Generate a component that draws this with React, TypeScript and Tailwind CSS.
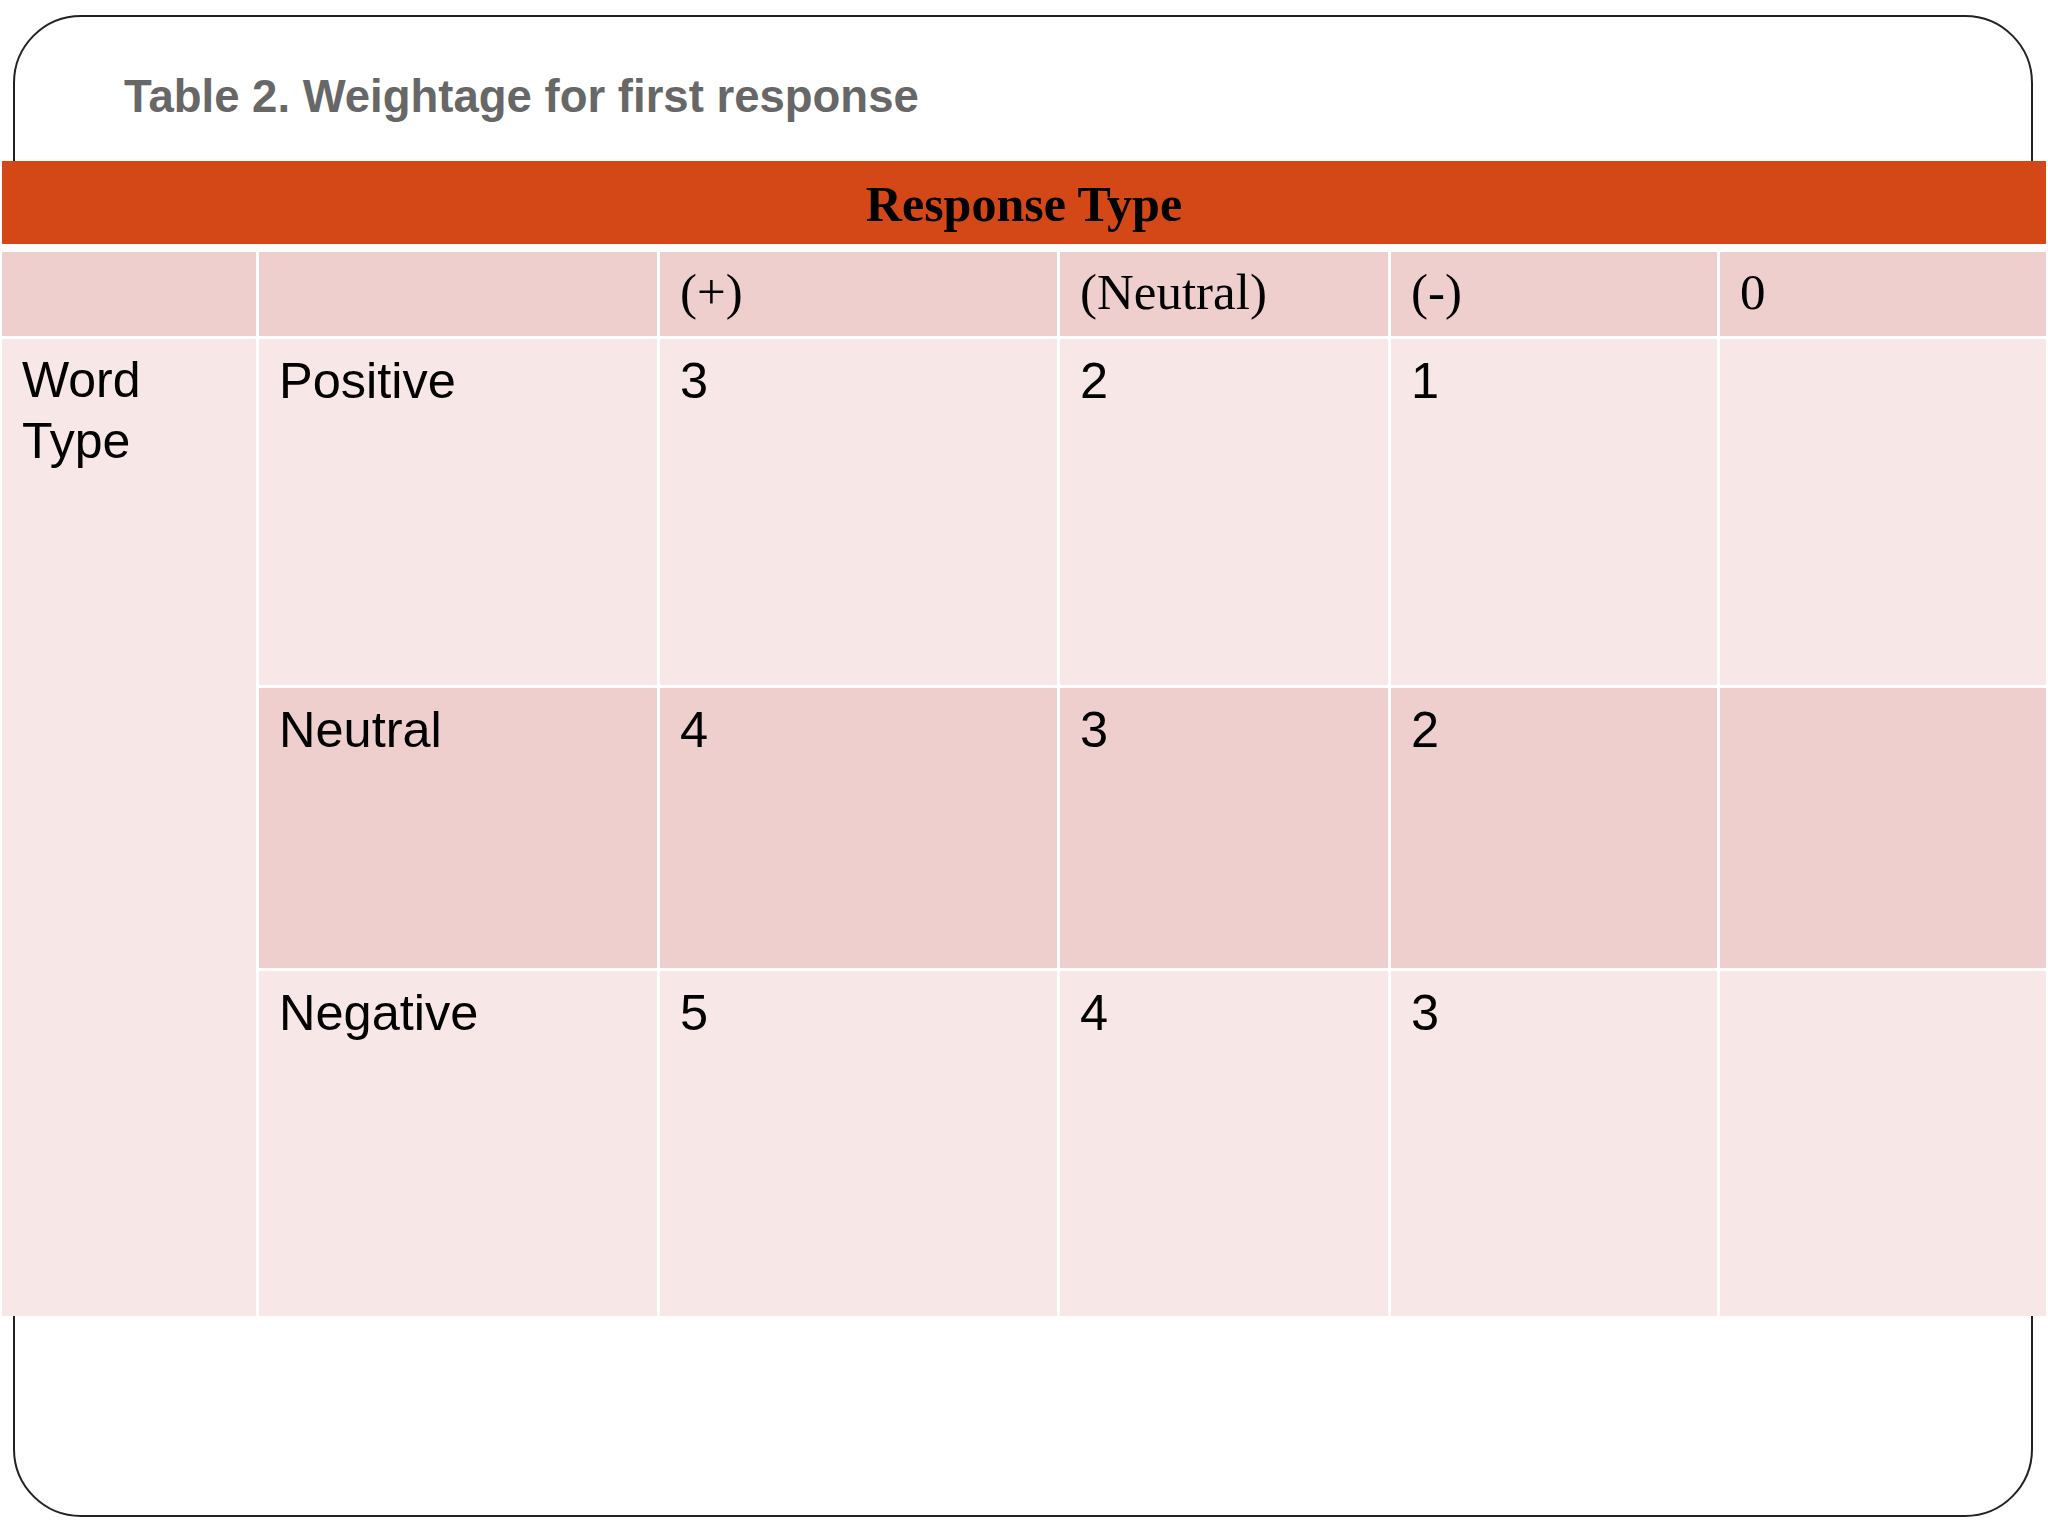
import React from 'react';

const serif = { fontFamily: '"Liberation Serif", "Times New Roman", serif' };
const sans = { fontFamily: '"Liberation Sans", Arial, sans-serif' };

const columns = ['(+)', '(Neutral)', '(-)', '0'];

const rows = [
  { label: 'Positive', values: ['3', '2', '1', ''], tone: 'light' },
  { label: 'Neutral', values: ['4', '3', '2', ''], tone: 'dark' },
  { label: 'Negative', values: ['5', '4', '3', ''], tone: 'light' },
];

const App: React.FC = () => {
  return (
    <div className="w-[2048px] h-[1536px] bg-white overflow-hidden pt-[15px] pl-[13px]">
      <div className="w-[2020px] h-[1502px] border-2 border-[#222] rounded-[68px]">
        <h1
          className="mt-[57px] ml-[109px] text-[45.5px] leading-[46px] font-bold text-[#676767]"
          style={sans}
        >
          Table 2. Weightage for first response
        </h1>

        <div className="mt-[41px] -ml-[13px] w-[2044px] bg-white">
          <div
            className="h-[83px] pt-[2px] bg-[#d44817] flex items-center justify-center text-[50px] leading-none font-bold text-black"
            style={serif}
          >
            Response Type
          </div>

          <div className="mt-[8px] grid grid-cols-[254px_398px_397px_328px_326px_326px] grid-rows-[84px_346px_280px_345px] gap-[3px] bg-white">
            <div className="bg-[#eecfcd]" />
            <div className="bg-[#eecfcd]" />
            {columns.map((c) => (
              <div
                key={c}
                className="bg-[#eecfcd] pl-[20px] pt-[10px] text-[51px] leading-[60px] text-black"
                style={serif}
              >
                {c}
              </div>
            ))}

            <div
              className="row-span-3 bg-[#f7e8e7] pl-[20px] pt-[11px] text-[50px] leading-[61px] text-black"
              style={sans}
            >
              Word
              <br />
              Type
            </div>

            {rows.map((r) => (
              <React.Fragment key={r.label}>
                <div
                  className={`${r.tone === 'dark' ? 'bg-[#eecfcd]' : 'bg-[#f7e8e7]'} pl-[20px] pt-[11px] text-[50.5px] leading-[61px] text-black`}
                  style={sans}
                >
                  {r.label}
                </div>
                {r.values.map((v, i) => (
                  <div
                    key={i}
                    className={`${r.tone === 'dark' ? 'bg-[#eecfcd]' : 'bg-[#f7e8e7]'} pl-[20px] pt-[11px] text-[50.5px] leading-[61px] text-black`}
                    style={sans}
                  >
                    {v}
                  </div>
                ))}
              </React.Fragment>
            ))}
          </div>
        </div>
      </div>
    </div>
  );
};

export default App;
